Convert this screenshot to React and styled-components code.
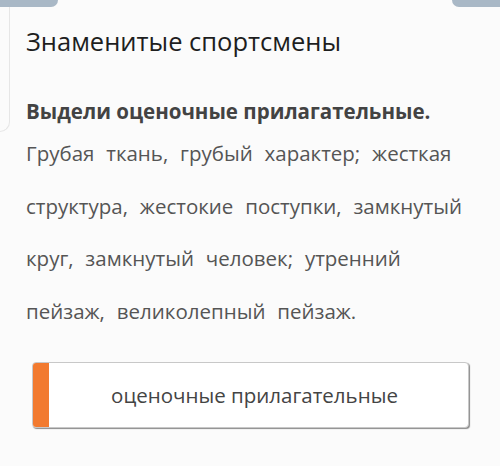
import React from 'react'
import styled, { createGlobalStyle } from 'styled-components'

const GlobalStyle = createGlobalStyle`
  html, body {
    margin: 0;
    padding: 0;
    background: #fbfbfb;
  }
  body {
    width: 500px;
    height: 466px;
    overflow: hidden;
    font-family: "Open Sans", "Noto Sans", sans-serif;
  }
`

const lines = [
  'Грубая ткань, грубый характер; жесткая',
  'структура, жестокие поступки, замкнутый',
  'круг, замкнутый человек; утренний',
  'пейзаж, великолепный пейзаж.',
]

const App = () => {
  return (
    <>
      <GlobalStyle />
      <Page>
        <TopBar>
          <Tab side="left" />
          <Tab side="right" />
        </TopBar>
        <Body>
          <Edge />
          <Content>
            <Title>Знаменитые спортсмены</Title>
            <Task>Выдели оценочные прилагательные.</Task>
            <Text>
              {lines.map((line) => (
                <Line key={line}>{line}</Line>
              ))}
            </Text>
            <Answer>
              <Marker />
              <AnswerText>оценочные прилагательные</AnswerText>
            </Answer>
          </Content>
        </Body>
      </Page>
    </>
  )
}

const Page = styled.div`
  width: 500px;
  height: 466px;
  display: flex;
  flex-direction: column;
`;

const TopBar = styled.div`
  display: flex;
  justify-content: space-between;
  height: 7px;
`;

const Tab = styled.div`
  width: ${(p) => (p.side === 'left' ? '58px' : '48px')};
  height: 7px;
  background: #a9b8c6;
  border-radius: ${(p) => (p.side === 'left' ? '0 0 8px 0' : '0 0 0 8px')};
`;

const Body = styled.div`
  display: flex;
  flex: 1;
`;

const Edge = styled.div`
  width: 9px;
  height: 124px;
  flex-shrink: 0;
  border-right: 1px solid #e6e6e6;
  border-bottom: 1px solid #e6e6e6;
  border-bottom-right-radius: 14px;
`;

const Content = styled.div`
  flex: 1;
  padding-left: 16px;
  display: flex;
  flex-direction: column;
`;

const Title = styled.div`
  margin-top: 17px;
  font-size: 25.5px;
  line-height: 34px;
  color: #1e1e1e;
`;

const Task = styled.div`
  margin-top: 39px;
  font-size: 20.5px;
  font-weight: 700;
  line-height: 28px;
  color: #434343;
`;

const Text = styled.div`
  margin-top: 15px;
  display: flex;
  flex-direction: column;
`;

const Line = styled.div`
  font-size: 20.5px;
  line-height: 52.5px;
  height: 52.5px;
  margin-top: -13px;
  margin-bottom: 13px;
  color: #555;
  word-spacing: 6.5px;
  white-space: nowrap;
`;

const Answer = styled.div`
  margin-top: 12px;
  margin-left: 6px;
  width: 437px;
  height: 66px;
  box-sizing: border-box;
  display: flex;
  background: #fff;
  border: 1px solid #c8c8c8;
  border-radius: 4px;
  box-shadow: 1px 1px 1px #8a8a8a;
  overflow: hidden;
`;

const Marker = styled.div`
  width: 16px;
  flex-shrink: 0;
  background: #f27a2f;
`;

const AnswerText = styled.div`
  flex: 1;
  display: flex;
  align-items: center;
  justify-content: center;
  font-size: 20.5px;
  color: #444;
  padding-right: 8px;
`;

export default App
